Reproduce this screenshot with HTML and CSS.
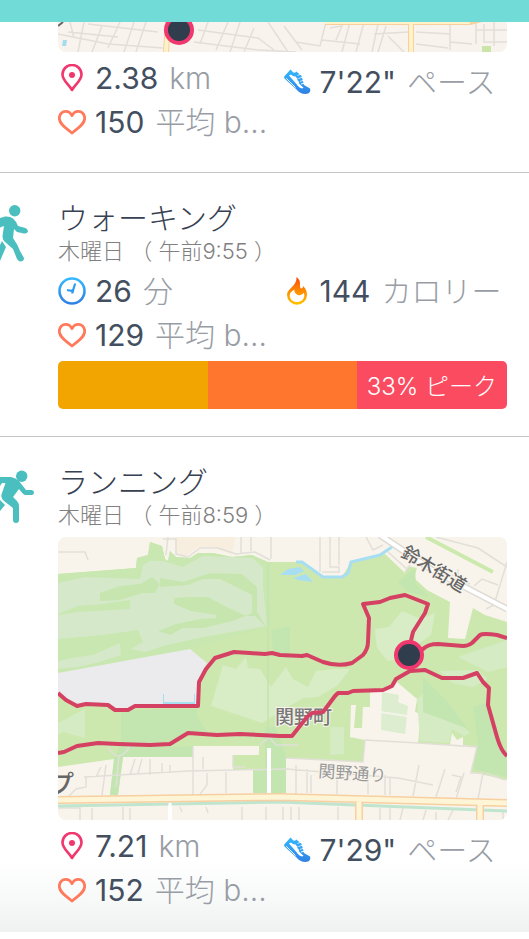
FILE: index.html
```
<!DOCTYPE html>
<html lang="ja">
<head>
    <meta charset="UTF-8">
    <meta name="viewport" content="width=device-width, initial-scale=1.0">
    <title>エクササイズ</title>
    <link rel="stylesheet" href="styles.css">
</head>
<body>
    <!-- 共通アイコン -->
    <svg class="defs" width="0" height="0" aria-hidden="true">
        <defs>
            <linearGradient id="blue" x1="0" y1="0" x2="0" y2="1">
                <stop offset="0" stop-color="#35b8fd"/>
                <stop offset="1" stop-color="#2f80e4"/>
            </linearGradient>
            <linearGradient id="fire" x1="0" y1="0" x2="0" y2="1">
                <stop offset="0" stop-color="#fb4a0c"/>
                <stop offset="0.5" stop-color="#ff8a00"/>
                <stop offset="1" stop-color="#ffc400"/>
            </linearGradient>
        </defs>
        <symbol id="pin" viewBox="0 0 28 28">
            <path d="M14 26C10.500 20 4.500 16.500 4.500 10.500a9.500 9.500 0 0 1 19 0C23.500 16.500 17.500 20 14 26z" fill="none" stroke="#f0376e" stroke-width="2.600" stroke-linejoin="round"/>
            <circle cx="14" cy="11" r="3" fill="#f0376e"/>
        </symbol>
        <symbol id="heart" viewBox="0 0 28 28">
            <path d="M14 25C9 20.500 1.300 16.500 1.300 10.200C1.300 6 4.300 3.300 7.700 3.300C10.500 3.300 12.800 5 14 7.600C15.200 5 17.500 3.300 20.300 3.300C23.700 3.300 26.700 6 26.700 10.200C26.700 16.500 19 20.500 14 25z" fill="none" stroke="#ff7a5c" stroke-width="2.800" stroke-linejoin="round"/>
        </symbol>
        <symbol id="clock" viewBox="0 0 28 28">
            <circle cx="14" cy="14" r="12.500" fill="none" stroke="url(#blue)" stroke-width="2.600"/>
            <path d="M17.200 6.500L14.800 14.200M9 13L16 14.300M14.800 12L14.300 16.500" fill="none" stroke="#319cf0" stroke-width="2.200"/>
        </symbol>
        <symbol id="shoe" viewBox="0 0 28 28">
            <path d="M7.500 1.500L9.300 3.300C10.200 5.200 12 5.200 13.300 3.500L18.500 7.800L21 17L27 20.500C28 23.500 26.500 25.800 22.500 26C18.500 26 16 24.500 13 21L1.500 10.500C0.500 9 1.500 8 2.500 7z" fill="url(#blue)"/>
            <path d="M6 7.600L8 6.600C10 8.500 11.800 8.800 13.300 8.300L17 16.500L20.500 19.700L19 20.500C16 19.800 14.500 17.500 12.500 15z" fill="#fff"/>
            <path d="M3.200 10.200L12.500 19.500" fill="none" stroke="#fff" stroke-width="0.900"/>
            <path d="M14.500 7.500L19 6M15.500 10.500L20 9.300M17 13.500L21 12.300M18 16L21.500 15.200" stroke="#fff" stroke-width="1"/>
            <path d="M13 9L17.500 8M14.500 12L19 10.800M16 15L20 13.800" stroke="#35a5f6" stroke-width="1.500"/>
        </symbol>
        <symbol id="flame" viewBox="0 0 28 28">
            <path d="M13.500 0C19.500 4.500 15.500 9 17.800 11.300C19.500 11.800 20.300 10.200 19.800 8.700C22.500 11 24 14.200 24 17.800A10 10 0 0 1 4 17.800C4 11.500 14.200 9 13.500 0zM11.500 12.500C9 14 6.700 15.500 6.700 18.500C6.700 22.300 10 25 14 25S21.300 22.300 21.300 18.500C21.300 17.500 21.200 16.700 20.800 15.800C19.300 18 17 18.600 15 17.900C12.200 17 11 14.800 11.500 12.500z" fill="url(#fire)" fill-rule="evenodd"/>
        </symbol>
    </svg>

    <header class="status-bar"></header>

    <main class="feed">
        <article class="card card-first">
            <div class="content">
                <svg class="map map-cut" viewBox="0 0 449 30" role="img" aria-label="地図">
                    <rect width="449" height="30" fill="#f8f3ec"/>
                    <g fill="none" stroke="#e2dfd8" stroke-width="1.500">
                        <path d="M0 12L50 22L105 26M12 0L16 16M26 0L20 30M44 4L34 30M62 0L50 26M76 0L66 30M88 0L78 30M10 10L60 15M30 2L100 10"/>
                        <path d="M136 20L200 28L238 30M140 8L200 16L216 28M150 0L142 22M170 0L158 28M182 0L172 30M196 6L186 30M210 0L230 30M226 4L244 28"/>
                        <path d="M238 20L262 24L268 0M264 18L302 22M272 6L284 4L278 18M292 0L284 30M306 0L298 30M320 2L314 30M328 4L320 30M316 12L350 10M330 14L346 30"/>
                        <path d="M358 10L392 12V0M392 12V28M392 20L414 22M418 0V22M418 8H449M436 0V24M358 22L390 26M426 2V20H449"/>
                    </g>
                    <path d="M110 0L108 30M267 0H412L424 -3M353 0V30" fill="none" stroke="#f8cf9d" stroke-width="6"/>
                    <path d="M110 0L108 30M267 0H412M353 0V30" fill="none" stroke="#fdf2c8" stroke-width="4"/>
                    <rect x="424" y="24" width="9" height="6" fill="#c9e6a8"/>
                    <path d="M5 18h4l-1 6h-4z" fill="#a4dcee"/>
                    <path d="M0 4L5 0" stroke="#666" stroke-width="2"/>
                    <circle cx="121" cy="8" r="15" fill="#f0376e"/>
                    <circle cx="121" cy="8" r="11" fill="#2f3d4d"/>
                </svg>
                <ul class="stats">
                    <li><svg class="icon"><use href="#pin"/></svg><b>2.38</b><span>km</span></li>
                    <li class="pace"><svg class="icon"><use href="#shoe"/></svg><b>7'22"</b><span>ペース</span></li>
                    <li><svg class="icon"><use href="#heart"/></svg><b>150</b><span>平均 b...</span></li>
                </ul>
            </div>
        </article>

        <article class="card">
            <svg class="activity" viewBox="0 0 58 64" aria-hidden="true">
                <circle cx="14.700" cy="9.700" r="5.700"/>
                <path d="M0 17L5 15.500Q10 15 13 17.500Q16 20 18 25L25.500 27Q28 28 28 30.500Q27 33 24 32.500L17 31L14 28L13 37Q18 44 20 50L24 57Q24 60 21 60.500Q18.500 60.500 17 58L13 48L4 40Q2.500 38 2.500 35L4 25L0 26.500z"/>
                <path d="M2 40L6 46L0 60V44z"/>
            </svg>
            <div class="content">
                <h2>ウォーキング</h2>
                <p class="date">木曜日 （ 午前9:55 ）</p>
                <ul class="stats">
                    <li><svg class="icon"><use href="#clock"/></svg><b>26</b><span>分</span></li>
                    <li><svg class="icon"><use href="#flame"/></svg><b>144</b><span>カロリー</span></li>
                    <li><svg class="icon"><use href="#heart"/></svg><b>129</b><span>平均 b...</span></li>
                </ul>
                <div class="zones">
                    <div class="zone fat-burn"></div>
                    <div class="zone cardio"></div>
                    <div class="zone peak">33% ピーク</div>
                </div>
            </div>
        </article>

        <article class="card card-last">
            <svg class="activity" viewBox="0 0 58 64" aria-hidden="true">
                <circle cx="21.700" cy="11.300" r="5.700"/>
                <path d="M0 12H11Q16 13 19 16L26 25H32Q34 25.500 34 27.500Q34 29.500 32 30H25Q23 29.500 19 24L13 32L17 36Q19 38 19 42V55Q19 58 16 58Q13 58 13 55V43L4 36Q0 33 2 28L5.500 18H2L0 21z"/>
                <path d="M0 35L5 40L0 46z"/>
            </svg>
            <div class="content">
                <h2>ランニング</h2>
                <p class="date">木曜日 （ 午前8:59 ）</p>
                <svg class="map" viewBox="0 0 449 283" role="img" aria-label="地図">
                    <rect width="449" height="283" fill="#f8f4ec"/>
                    <path d="M117 0H177L174 18L155 10H140L126 20L117 15z" fill="#f7eedf"/>
                    <!-- 公園 -->
                    <path d="M0 37L78 31L79 21L90 18L92 5L104 9L107 22L110 24L112 14L118 20L132 21L140 16H155L174 20L194 18L210 25H244L265 40H284L293 25L326 16L347 36L350 29L359 31L356 41L369 53L392 65L390 101L407 102L415 71L427 78L449 85V243L413 235L419 210L405 208L405 200L399 203L394 196L392 208L360 206L363 177L357 175L359 162L339 145L312 156V170H305L304 191H296L298 168H293L292 200L307 203L305 225L228 221V256H195V233H175V218H201V209H135V220H65L60 258H52L56 222L0 230z" fill="#cde8af"/>
                    <path d="M0 37L78 31L79 21L90 18L92 5L104 9L107 22L110 24L112 14L118 20L132 21L140 16H155L174 20L194 18L210 25H213V89L132 112L0 136z" fill="#c9e7b0"/>
                    <path d="M63 173H135L150 196L130 198L112 210L135 209V220H65L60 258H52L56 222L63 205zM95 172H139V195L95 205zM213 93L232 89V123L215 115zM207 190H218L228 220V256H195V233H207z" fill="#c3e6b1"/>
                    <path d="M0 46L28 40L82 42L85 28L92 24L105 24L125 30L145 19L194 21L205 30V48L209 89L180 94L140 101L105 109L88 115L72 112L85 105L80 93L45 98L0 102V78L20 75L72 72V63L45 67L20 69L0 77z" fill="#d5e9ca"/>
                    <path d="M0 124L14 121L35 118L62 106L63 118L38 126L20 130L0 132z" fill="#d5e9ca"/>
                    <path d="M42 56L62 49L82 47L94 40L102 47L97 56L85 56L62 63L42 64zM102 41L125 45L152 36L184 37L199 50V75L209 91L197 79H188L165 68L150 60L128 60L116 61V67L133 74L158 78V81L142 82L118 87L100 94L112 98L125 91L145 91L175 84L185 80L194 76V58L162 42L145 42L130 48L102 50z" fill="#c7e6af"/>
                    <path d="M165 128L178 132L188 120L190 131L202 132L213 150L228 130L235 142L250 150L258 134L276 132L292 132L280 148L260 160L245 161L230 170L204 186L180 178L153 169z" fill="#d8ecc6"/>
                    <path d="M317 92L331 90L344 74L363 82L377 76L373 98L353 112L340 122L330 124L319 111L318 103z" fill="#d8ecc6"/>
                    <path d="M359 162L374 150L392 176L412 196L406 199L394 192L391 206L362 204zM272 190H286V217L272 218zM0 186L27 172V201L5 195L0 198z" fill="#d5ebc3"/>
                    <path d="M382 134L419 133L430 142L415 150L395 146zM400 120L449 103V130L430 135z" fill="#d5ebc3"/>
                    <path d="M415 170L430 165L440 205L449 215V240L415 232L420 208zM365 140L390 165L410 192L365 175zM340 45L357 31L358 48L372 60L350 55z" fill="#c3e6b1"/>
                    <path d="M324 155L341 158L340 165L350 169L347 197L323 193z" fill="#dcedd0"/>
                    <path d="M322 175L349 179" stroke="#f5f4ea" stroke-width="2"/>
                    <path d="M0 136L132 112L149 126L140 143V170H77L70 173H57L50 168L19 169L0 158z" fill="#ebebed"/>
                    <path d="M352 0H368L437 31L435 36z" fill="#f8f4ec"/>
                    <path d="M368 0L435 35" stroke="#cdeaae" stroke-width="4"/>
                    <!-- 川 -->
                    <path d="M238 25H244L265 40H284L290 36L293 25L322 18L334 10" fill="none" stroke="#a8def2" stroke-width="3"/>
                    <path d="M222 38L230 32L242 30L246 34L238 38zM235 41L248 37L255 45L240 43zM105 157V168H137V157" fill="#a8def2"/>
                    <path d="M106 156H136V165H106z" fill="#ebebed"/>
                    <!-- 細い道 -->
                    <g fill="none" stroke="#e1dfd8" stroke-width="1.500">
                        <path d="M0 15H27L30 23M105 2H118V18M110 0L108 18M118 17L130 20L142 11H160L178 17L197 15L212 23M183 0V16M193 0V14M213 0V22"/>
                        <path d="M262 0V35M272 0V30H281V35H264M281 0V28M308 0L315 13L325 8M330 15L349 32M347 35L352 28M449 25L436 68L428 72M378 0L420 11L449 30M400 32V42L412 47M416 49L424 42L440 48M382 47L395 38"/>
                        <path d="M26 240L130 234L228 232L340 241L375 248M28 240V250L18 252L10 260M43 230L38 240M48 228L44 258M77 222L72 238M84 222L80 236M92 222V238M104 226V236M112 228V236M135 210V258M145 220V232M149 236V248L142 257M168 235V256M175 218V230H187M238 228V257M249 232V256M253 238V256M279 236V257M310 236V257M327 238V258M332 240V258M361 228L355 259M387 232L378 260M394 238L403 240L398 255M406 236L398 262M412 236H425L420 262M427 236L447 243"/>
                        <path d="M0 271H22V283M34 271V283M65 270V283M72 271V283M122 270L124 275M148 270L150 276M184 270V283M208 270V283M225 270V283M233 270V283M241 270V283M280 270V283M322 271V283M332 271V283M345 271L342 283M368 273L365 283M378 275V283M395 273L390 283M445 275V283"/>
                        <path d="M228 221L305 225L307 203L360 206L419 210L413 235M50 210Q55 219 61 219Q68 217 71 210M61 219L58 250M202 208L211 200L218 208H240"/>
                    </g>
                    <path d="M210 25V198" stroke="#c5e3ae" stroke-width="1.500"/>
                    <path d="M322 -2L374 33L449 72" fill="none" stroke="#dedbd5" stroke-width="7"/>
                    <path d="M322 -2L374 33L449 72M211 211V260M112 264V283" fill="none" stroke="#fff" stroke-width="4"/>
                    <!-- 幹線道路 -->
                    <path d="M0 269L222 265L449 274" fill="none" stroke="#bfe5cf" stroke-width="3"/>
                    <path d="M0 263L222 260L449 266M301 262V283M422 266V283" fill="none" stroke="#f7cfa0" stroke-width="8"/>
                    <path d="M0 263L222 260L449 266M301 262V283M422 266V283" fill="none" stroke="#fdf5d5" stroke-width="5"/>
                    <path d="M112 266V283" stroke="#fff" stroke-width="3"/>
                    <g class="place">
                        <text x="342" y="19" transform="rotate(31 342 19)" font-size="18">鈴木街道</text>
                        <text class="town" x="217" y="187" font-size="19">関野町</text>
                        <text class="minor" x="260" y="240" transform="rotate(4 260 240)" font-size="17">関野通り</text>
                        <text x="-9" y="256" font-size="25">プ</text>
                    </g>
                    <!-- ルート -->
                    <g fill="none" stroke="#d54162" stroke-width="4" stroke-linejoin="round">
                        <path d="M0 156L8 163L19 169L28 167L50 168L57 173H70L77 169H140L141 145L148 132L157 121L176 115L192 116L207 117L214 116L222 118L244 119L249 118L265 125Q280 130 294 126L305 118Q310 112 310 105L311 81L305 67L322 65L332 61L347 58L370 67L367 76L355 95L351 112L365 112Q370 107 380 107L405 109Q410 109 414 106L422 98Q425 96 439 98L449 101"/>
                        <path d="M0 216L6 215L19 209L40 206L60 207L92 208L112 207L130 196L159 198L182 197L222 199H234L249 180L254 176L265 175L277 159L280 156H290L295 154L325 153L334 149L338 142L352 134L367 133L384 141H405L419 136L425 145L431 151L430 168L439 200Q443 214 449 219"/>
                    </g>
                    <circle cx="351" cy="118" r="15" fill="#f0376e"/>
                    <circle cx="351" cy="118" r="11" fill="#2f3d4d"/>
                </svg>
                <ul class="stats">
                    <li><svg class="icon"><use href="#pin"/></svg><b>7.21</b><span>km</span></li>
                    <li class="pace"><svg class="icon"><use href="#shoe"/></svg><b>7'29"</b><span>ペース</span></li>
                    <li><svg class="icon"><use href="#heart"/></svg><b>152</b><span>平均 b...</span></li>
                </ul>
            </div>
        </article>
    </main>
</body>
</html>
```
FILE: styles.css
```
* {
    box-sizing: border-box;
}
body {
    margin: 0;
    background: #fff;
    font-family: Inter, "Noto Sans CJK JP", sans-serif;
    color: #434f5f;
}
.defs {
    position: absolute;
}
.status-bar {
    height: 22px;
    background: #71dcd7;
}
.feed {
    background: linear-gradient(to top, #eff0f0, #f7f8f8 30px, #fff 72px);
}
.card {
    display: grid;
    grid-template-columns: 58px 1fr;
    padding: 28px 22px 27px 0;
    border-bottom: 1px solid #c6c6c6;
}
.card-first {
    padding-top: 0;
    padding-bottom: 28px;
}
.card-last {
    padding-bottom: 20px;
    border-bottom: 0;
}
.content {
    grid-column: 2;
    min-width: 0;
}
.activity {
    width: 58px;
    height: 64px;
    fill: #4bbfbf;
}
h2 {
    margin: 0;
    font-size: 30px;
    line-height: 34px;
    font-weight: 300;
    color: #374151;
}
.date {
    margin: 0;
    padding-bottom: 2px;
    font-size: 22px;
    line-height: 32px;
    font-weight: 300;
    color: #808080;
    white-space: nowrap;
}
.map {
    display: block;
    width: 100%;
    height: auto;
    margin: 4px 0;
    border-radius: 8px;
}
.map-cut {
    margin-top: 0;
    border-radius: 0 0 8px 8px;
}
.place {
    font-family: "Noto Sans CJK JP", sans-serif;
    font-weight: 500;
    fill: #666;
    stroke: #f8f4ec;
    stroke-width: 2px;
    paint-order: stroke;
}
.place .town {
    fill: #777;
}
.place .minor {
    font-weight: 400;
    fill: #999;
}
.stats {
    display: grid;
    grid-template-columns: 1fr 1fr;
    margin: 0;
    padding: 0;
    list-style: none;
}
.stats li {
    display: flex;
    align-items: center;
    height: 44px;
    white-space: nowrap;
}
.stats .pace {
    padding-top: 8px;
}
.icon {
    flex: none;
    width: 28px;
    height: 28px;
    margin-right: 9px;
}
.stats b {
    margin-right: 11px;
    font-size: 30px;
    line-height: 44px;
    font-weight: 400;
}
.stats span {
    font-size: 30px;
    line-height: 44px;
    font-weight: 300;
    color: #989da5;
}
.zones {
    display: grid;
    grid-template-columns: 1fr 1fr 1fr;
    height: 48px;
    margin-top: 4px;
    border-radius: 5px;
    overflow: hidden;
}
.zone {
    padding-right: 10px;
    font-size: 24px;
    line-height: 52px;
    font-weight: 300;
    text-align: right;
    white-space: nowrap;
    color: #fff;
}
.fat-burn {
    background: #f2a500;
}
.cardio {
    background: #ff762f;
}
.peak {
    background: #fb4b60;
}
```
